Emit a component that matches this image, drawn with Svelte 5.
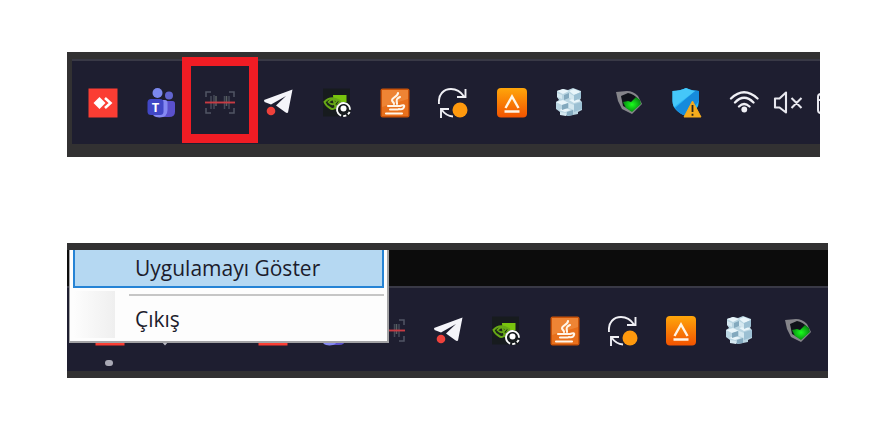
<script lang="ts">
    type TrayIcon = { id: string, title: string };

    const icons: TrayIcon[] = [
        { id: "anydesk", title: "AnyDesk" },
        { id: "teams", title: "Teams" },
        { id: "scanner", title: "Barkod" },
        { id: "telegram", title: "Telegram" },
        { id: "nvidia", title: "NVIDIA" },
        { id: "java", title: "Java" },
        { id: "sync", title: "Sync" },
        { id: "arrow", title: "Launcher" },
        { id: "cubes", title: "Servers" },
        { id: "gem", title: "Device" },
        { id: "shield", title: "Security" },
    ];
    const menuIcons = icons.slice(0, 10);
</script>

{#snippet icon(id: string)}
    <svg viewBox="0 0 30 30" aria-hidden="true">
        {#if id === "anydesk"}
            <rect x="0.5" y="0.5" width="29" height="29" fill="#fb3d33" />
            <path d="M5.500 15l6-6 6 6-6 6z" fill="#fff" />
            <path d="M17 10l5.500 5-5.500 5" fill="none" stroke="#fff" stroke-width="2.600" />
        {:else if id === "teams"}
            <circle cx="23" cy="7.500" r="4" fill="#6164cf" />
            <path d="M17 13h9.500q2.500 0 2.500 2.500V24q0 5-6 5h-6z" fill="#5a50cb" />
            <circle cx="11.500" cy="5" r="5" fill="#7b88ee" />
            <path d="M6 12h13q2.500 0 2.500 2.500V22q0 7.500-8 7.500T6 22z" fill="#8589f2" />
            <rect x="1.500" y="11" width="16" height="16" rx="3.500" fill="#4147c5" />
            <text x="9.500" y="23.500" text-anchor="middle" class="logo-letter">T</text>
        {:else if id === "scanner"}
            <g fill="none" stroke="#515564" stroke-width="1.500">
                <path d="M1 9V4h5M24 4h5v5M29 20v5h-5M6 25H1v-5" />
                <path d="M6 8v13M9 7v14M19.500 8v13M24 8v13" stroke="#454a58" />
                <path d="M11 8v10M21.500 8v10" stroke="#596062" />
            </g>
            <path d="M0 14.500h30" stroke="#c73b43" stroke-width="1.900" />
        {:else if id === "telegram"}
            <path d="M1 12L29.500 1.500 25 24.500Q24 25.500 22 24L13 17.500 23 8 8 16.500 1.500 14z" fill="#f5f5fa" />
            <circle cx="8" cy="23" r="4.300" fill="#ef413b" />
        {:else if id === "nvidia"}
            <rect x="1" y="0.500" width="27" height="28" fill="#171b1e" />
            <path d="M11 7h13.500v14H12z" fill="#79c40e" />
            <path d="M2.500 14Q9 7 18 13q-6 11-10 7-4-2-5.500-6z" fill="#1b2618" stroke="#67a916" stroke-width="2" />
            <path d="M6.500 14q4-5 8.500-1-4 6-8.500 1zM11 10l3 11" fill="none" stroke="#67a916" stroke-width="1.800" />
            <circle cx="21.500" cy="21.500" r="7.500" fill="#171b1e" />
            <circle cx="21.500" cy="21.500" r="6.500" fill="none" stroke="#fff" stroke-width="1.900" stroke-dasharray="24 2 3 2 3 2" transform="rotate(145 21.500 21.500)" />
            <circle cx="21.500" cy="20.500" r="3" fill="#fff" />
        {:else if id === "java"}
            <rect x="0.500" y="0.500" width="29" height="29" rx="2" fill="#c95208" />
            <rect x="2" y="2" width="26" height="26" fill="#e8701c" />
            <path d="M2 2h26v9L2 19z" fill="#ee8434" />
            <g fill="none" stroke="#fff5e8" stroke-width="2.100" stroke-linecap="round">
                <path d="M18 5c0 4-6 4-6 7 0 2 2 2 2 4M20 9c-5 2-3 4-3 7" />
                <path d="M8 18h12q5-2 4 1t-5 2M10 21.500h8M6 25.500h16" />
            </g>
        {:else if id === "sync"}
            <g fill="none" stroke="#f0f0f5" stroke-width="1.900">
                <path d="M1 16C0 6 6 1 13 1q8 0 13 7.500M27.500 1v8H19" />
                <path d="M3 30v-9h8M3.500 21.500Q8 28 15 28.500" />
            </g>
            <circle cx="22" cy="22" r="7.500" fill="#ff990d" />
        {:else if id === "arrow"}
            <defs>
                <linearGradient id="arrow-fill" x2="0" y2="1">
                    <stop stop-color="#ffa60a" />
                    <stop offset="1" stop-color="#f25300" />
                </linearGradient>
            </defs>
            <rect width="30" height="29.500" rx="4" fill="url(#arrow-fill)" />
            <path d="M8.500 20L15 8.500 21.500 20M7.500 23.500h15" fill="none" stroke="#fff5e5" stroke-width="2.400" />
        {:else if id === "cubes"}
            <path d="M2 3l6-2 5 1 5-2 8 3v7l-1 2 2 2v8l-4 2v2l-10 2-8-2v-2l-4-3v-7l3-2-2-3z" fill="#b9d5e2" />
            <path d="M2 3l6-2 6 2-6 3zM14 3l5-2 7 3-7 3zM1 14l7-2 6 3-7 2zM14 12l6-2 6 3-7 2zM4 22l6-2 6 2-6 2z" fill="#e9f5fa" />
            <path d="M9 7l5-2v5l-5 2zM7 17l6-2v5l-6 2zM12 24l6-2v5l-6 1z" fill="#83a9be" />
            <path d="M19 7l7-3v6l-7 3zM19 16l8-2v7l-8 3z" fill="#9cc0d3" />
            <path d="M2 5l5 2v4l-5-2zM14 5l5 3v4l-5-2zM14 15l5 2v5l-5-2zM5 24l6 1v3l-6-1z" fill="#d5e8f0" />
        {:else if id === "gem"}
            <defs>
                <radialGradient id="gem-fill">
                    <stop stop-color="#1aff1c" />
                    <stop offset="1" stop-color="#078a12" />
                </radialGradient>
            </defs>
            <path d="M2 4l11-1q6 0 11 5l4 8-10 10-10-5-4-8z" fill="#85858a" />
            <path d="M7 8l7-3q6 1 10 6l2 5-8 7-9-5z" fill="#10131a" />
            <path d="M9 14l5-1 3 1 5-5 4 3 1 4-9 8-6-4z" fill="url(#gem-fill)" />
        {:else if id === "shield"}
            <path d="M0.500 3Q8 3 14 0q6 3 13 3v10q0 10-13 15Q0.500 23 0.500 13z" fill="#29b5f6" />
            <path d="M14 0q6 3 13 3v10L14 28Q6 25 3 20L23 3z" fill="#168bdc" />
            <path d="M0.500 3Q8 3 14 0q6 3 9 3L2 19Q0.500 16 0.500 13z" fill="#45c7f9" />
            <path d="M20.500 13l8.500 16H12z" fill="#f6ac1d" stroke="#f6ac1d" stroke-linejoin="round" />
            <path d="M20.500 17v7m0 1.800v2" stroke="#29231a" stroke-width="1.800" />
        {:else if id === "wifi"}
            <g fill="none" stroke="#f0f0f5" stroke-width="2.300" stroke-linecap="round">
                <path d="M2 10.500Q15-2 28.500 10.500M6 14.500Q15 5 24.500 14.500M10 18.500q5-5 10.500 0" />
            </g>
            <circle cx="15.300" cy="21.500" r="2.900" fill="#f0f0f5" />
        {:else if id === "volume"}
            <g fill="none" stroke="#e8e8ef" stroke-width="2.100" stroke-linejoin="round">
                <path d="M2 10.500h4.500L13 4.500v20l-6.500-5H2zM18.500 10l10 10M28.500 10l-10 10" />
            </g>
        {:else if id === "battery"}
            <path d="M8 6H4Q1 6 1 9v13q0 3 3 3h4M1 12h6" fill="none" stroke="#e8e8ef" stroke-width="2" />
        {:else if id === "chevron"}
            <path d="M8 20l7 8 7-8" fill="none" stroke="#b9b9c2" stroke-width="2" />
        {/if}
    </svg>
{/snippet}

{#snippet trayButton(item: TrayIcon, marked: boolean)}
    <li>
        <button class="tray-icon" class:marked aria-label={item.title}>
            {@render icon(item.id)}
        </button>
    </li>
{/snippet}

<main>
    <section class="strip">
        <div class="taskbar first">
            <ul class="tray">
                {#each icons as item}
                    {@render trayButton(item, item.id === "scanner")}
                {/each}
            </ul>
            <div class="status">
                <button class="tray-icon" aria-label="Wi-Fi">{@render icon("wifi")}</button>
                <button class="tray-icon" aria-label="Ses">{@render icon("volume")}</button>
                <button class="tray-icon" aria-label="Pil">{@render icon("battery")}</button>
            </div>
        </div>
    </section>

    <section class="strip with-menu">
        <div class="window-edge"></div>
        <div class="taskbar second">
            <div class="pinned">
                <button class="tray-icon running" aria-label="AnyDesk">{@render icon("anydesk")}</button>
                <button class="tray-icon" aria-label="Gizli simgeler">{@render icon("chevron")}</button>
            </div>
            <ul class="tray">
                {#each menuIcons as item}
                    {@render trayButton(item, false)}
                {/each}
            </ul>
        </div>

        <div class="menu" role="menu">
            <button class="menu-item active" role="menuitem">Uygulamayı Göster</button>
            <div class="rest">
                <hr>
                <button class="menu-item" role="menuitem">Çıkış</button>
            </div>
        </div>
    </section>
</main>

<style>
    :global(body) {
        margin: 0;
        background: #fff;
    }

    main {
        display: flex;
        flex-direction: column;
        gap: 86px;
        padding: 52px 57px 59px 67px;
        font-family: "Open Sans", "Noto Sans", sans-serif;
    }

    button {
        border: 0;
        padding: 0;
        background: none;
        font: inherit;
    }

    .strip {
        position: relative;
        background: #323132;
        padding: 7px 0;
    }
    .strip:first-child {
        margin-right: 8px;
        padding: 7px 0 13px 5px;
    }

    .taskbar {
        display: flex;
        box-sizing: border-box;
        border-top: 2px solid #393946;
        background: #1e1e30;
    }
    .first {
        padding: 27px 0 26px 16px;
        gap: 27px;
        overflow-x: clip;
    }
    .second {
        padding: 28px 15px 25px 28px;
        gap: 78px;
    }

    .tray {
        display: flex;
        flex: 1;
        justify-content: space-between;
        margin: 0;
        padding: 0;
        list-style: none;
    }

    .status {
        display: flex;
        gap: 14px;
        margin-right: -27px;
    }

    .pinned {
        display: flex;
        gap: 25px;
    }

    .tray-icon {
        display: block;
        position: relative;
        width: 30px;
        height: 30px;
    }
    .tray-icon svg {
        display: block;
        width: 30px;
        height: 30px;
    }
    .logo-letter {
        font: bold 13px "Open Sans", sans-serif;
        fill: #fff;
    }

    .marked::after {
        content: "";
        position: absolute;
        inset: -31px -23px -25px;
        border: 9px solid #f01c24;
    }

    .running::after {
        content: "";
        position: absolute;
        left: 10px;
        bottom: -20px;
        width: 8px;
        height: 6px;
        border-radius: 3px;
        background: #a9a9b5;
    }

    .window-edge {
        height: 36px;
        background: #0c0c0c;
    }

    .menu {
        position: absolute;
        top: 7px;
        left: 2px;
        box-sizing: border-box;
        width: 320px;
        padding: 0 3px 3px;
        border: solid #a3a3a5;
        border-width: 0 2px 2px 1px;
        background: #fdfdfd;
        color: #1c1c2c;
    }

    .menu-item {
        display: block;
        box-sizing: border-box;
        width: 100%;
        height: 38px;
        padding: 0 0 0 62px;
        font-size: 21px;
        line-height: 36px;
        color: inherit;
        text-align: left;
    }
    .active {
        padding: 0 0 0 60px;
        border: solid #2583d5;
        border-width: 0 2px 2px;
        background: #b5d8f2;
    }

    .rest {
        margin-top: 3px;
        padding-top: 3px;
        background: linear-gradient(to right, #fdfdfd, #efefef) no-repeat 0 0 / 42px 100%;
    }

    hr {
        height: 2px;
        margin: 0 0 4px 56px;
        border: 0;
        background: #c6c6c6;
    }
</style>
